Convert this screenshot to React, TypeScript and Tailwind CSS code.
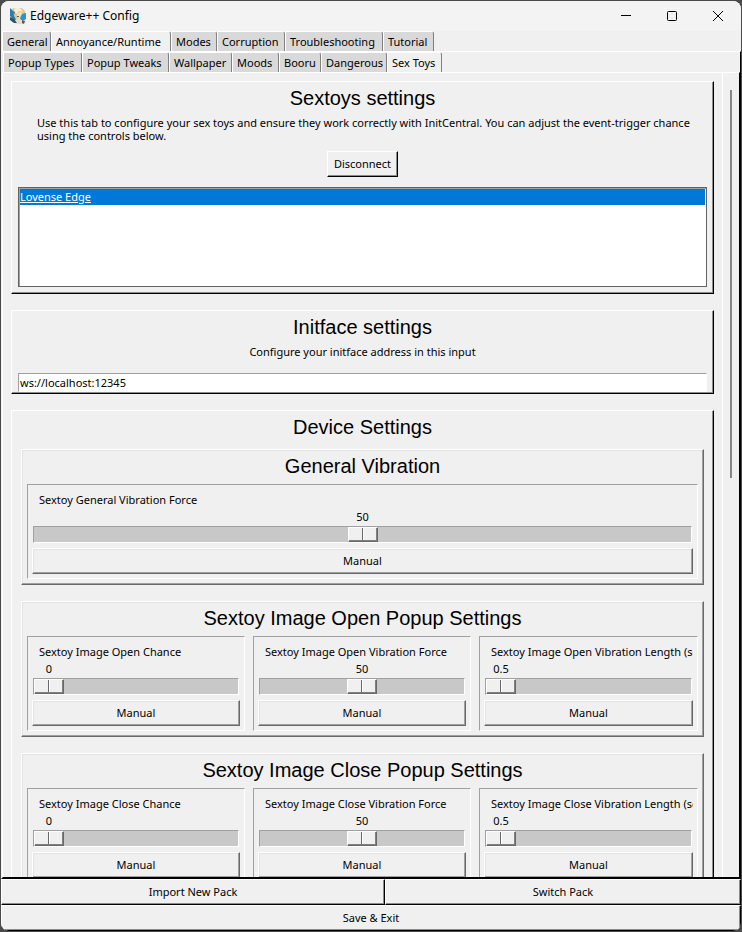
import { useState } from "react";
import clsx from "clsx";

const raised =
  "border border-t-white border-l-white border-r-black border-b-black shadow-[inset_-1px_-1px_0_#8c8c8c]";
const softRaised =
  "border border-t-white border-l-white border-r-[#696969] border-b-[#696969] shadow-[inset_-1px_-1px_0_#a0a0a0,inset_1px_1px_0_#e3e3e3]";
const sunken =
  "border border-t-[#a0a0a0] border-l-[#a0a0a0] border-r-white border-b-white";

type Tab = { label: string; width: string };

const mainTabs: Tab[] = [
  { label: "General", width: "w-[49px]" },
  { label: "Annoyance/Runtime", width: "w-[120px]" },
  { label: "Modes", width: "w-[46px]" },
  { label: "Corruption", width: "w-[68px]" },
  { label: "Troubleshooting", width: "w-[98px]" },
  { label: "Tutorial", width: "w-[51px]" },
];

const subTabs: Tab[] = [
  { label: "Popup Types", width: "w-[79px]" },
  { label: "Popup Tweaks", width: "w-[87px]" },
  { label: "Wallpaper", width: "w-[63px]" },
  { label: "Moods", width: "w-[47px]" },
  { label: "Booru", width: "w-[42px]" },
  { label: "Dangerous", width: "w-[66px]" },
  { label: "Sex Toys", width: "w-[55px]" },
];

function TabRow({ tabs, initial, name }: { tabs: Tab[]; initial: string; name: string }) {
  const [active, setActive] = useState(initial);
  return (
    <div role="tablist" aria-label={name} className="flex h-5 pl-px">
      {tabs.map((t) => (
        <button
          key={t.label}
          role="tab"
          aria-selected={t.label === active}
          onClick={() => setActive(t.label)}
          className={clsx(
            "shrink-0 rounded-tr-[3px] border-t border-r border-l border-t-white border-l-white border-r-[#808080] pl-1 text-left whitespace-nowrap",
            t.width,
            t.label === active ? "-mb-px bg-[#f0f0f0]" : "bg-[#d9d9d9]",
          )}
        >
          {t.label}
        </button>
      ))}
    </div>
  );
}

type Setting = { label: string; value: number; min: number; max: number; step: number };

function SliderPanel({ setting }: { setting: Setting }) {
  const [value, setValue] = useState(setting.value);
  const ratio = (value - setting.min) / (setting.max - setting.min);
  const id = setting.label.toLowerCase().replace(/[^a-z]+/g, "-");
  return (
    <div className={clsx("min-w-0 p-1", sunken)}>
      <div className="overflow-hidden">
        <label htmlFor={id} className="mt-[3px] block pl-[7px] leading-4 whitespace-nowrap">
          {setting.label}
        </label>
      </div>
      <div className="mt-px flex px-0.5">
        <div style={{ flexGrow: ratio }} />
        <output htmlFor={id} className="w-[30px] text-center leading-4">
          {value}
        </output>
        <div style={{ flexGrow: 1 - ratio }} />
      </div>
      <div className={clsx("mx-px mt-px flex bg-[#c8c8c8]", sunken)}>
        <input
          id={id}
          type="range"
          min={setting.min}
          max={setting.max}
          step={setting.step}
          value={value}
          onChange={(e) => setValue(Number(e.target.value))}
          className="h-[15px] w-full appearance-none bg-transparent [&::-webkit-slider-thumb]:h-[15px] [&::-webkit-slider-thumb]:w-[30px] [&::-webkit-slider-thumb]:appearance-none [&::-webkit-slider-thumb]:border [&::-webkit-slider-thumb]:border-t-white [&::-webkit-slider-thumb]:border-r-[#696969] [&::-webkit-slider-thumb]:border-b-[#696969] [&::-webkit-slider-thumb]:border-l-white [&::-webkit-slider-thumb]:bg-[linear-gradient(90deg,#f0f0f0_13px,#696969_13px,#696969_14px,#fff_14px,#fff_15px,#f0f0f0_15px)] [&::-webkit-slider-thumb]:shadow-[inset_-1px_-1px_0_#808080]"
        />
      </div>
      <button className={clsx("mt-[5px] block h-[26px] w-full bg-[#f0f0f0]", softRaised)}>Manual</button>
    </div>
  );
}

function SettingGroup({ title, settings }: { title: string; settings: Setting[] }) {
  return (
    <section className={clsx("px-[5px] pb-[5px]", softRaised)}>
      <h3 className="h-[34px] text-center font-['Liberation_Sans',Arial,sans-serif] text-xl leading-8">{title}</h3>
      <div className={clsx("grid gap-2", settings.length === 3 ? "grid-cols-[218fr_218fr_219fr]" : "grid-cols-1")}>
        {settings.map((s) => (
          <SliderPanel key={s.label} setting={s} />
        ))}
      </div>
    </section>
  );
}

function popupSettings(event: string): Setting[] {
  return [
    { label: `Sextoy Image ${event} Chance`, value: 0, min: 0, max: 100, step: 1 },
    { label: `Sextoy Image ${event} Vibration Force`, value: 50, min: 0, max: 100, step: 1 },
    { label: `Sextoy Image ${event} Vibration Length (sec)`, value: 0.5, min: 0.5, max: 10, step: 0.5 },
  ];
}

function AppIcon() {
  return (
    <svg width="18" height="18" viewBox="0 0 18 18" aria-hidden="true">
      <path d="M2 2l4-1 3 1 4-1 3 3 1 5-1 6-4 2-6-1-4-5z" fill="#dcc892" />
      <path d="M1 1l3 3 1 5 3 5-3-1-4-4z" fill="#267eb5" />
      <path d="M1 10l4 2 3 4H5l-4-3z" fill="#314e63" />
      <path d="M6 1l6 1 2 3-4-1-3 3-2-3z" fill="#f8efcf" />
      <path d="M8 6l4-1 2 4-3 3-3-2z" fill="#f3ddca" />
      <path d="M13 7l4-1v6l-4 2-2-3z" fill="#2895d0" />
      <path d="M6 13l3-2 3 2 4 0-1 4-6 0z" fill="#e4ddd0" />
      <path d="M8 9h2v1H8zM13 13l3 1-1 3-2-1zM4 4l2 1-1 3z" fill="#6b5548" />
    </svg>
  );
}

export default function App() {
  const [address, setAddress] = useState("ws://localhost:12345");
  return (
    <div className="h-screen bg-[#4a4a4a] p-px font-['Noto_Sans','Open_Sans',sans-serif] text-[11px] leading-4 text-black">
      <div className="flex h-full flex-col overflow-hidden rounded-lg bg-[#f0f0f0]">
        <header className="flex h-[30px] shrink-0 items-center bg-[#f3f3f3] pl-2">
          <AppIcon />
          <h1 className="ml-[3px] flex-1 text-xs">Edgeware++ Config</h1>
          <button aria-label="Minimize" className="flex h-full w-[46px] items-center justify-center">
            <svg width="10" height="10" viewBox="0 0 10 10" stroke="#000">
              <path d="M0 4.5h10" />
            </svg>
          </button>
          <button aria-label="Maximize" className="flex h-full w-[46px] items-center justify-center">
            <svg width="10" height="10" viewBox="0 0 10 10" fill="none" stroke="#000">
              <rect x=".5" y=".5" width="9" height="9" rx="1" />
            </svg>
          </button>
          <button aria-label="Close" className="flex h-full w-[46px] items-center justify-center">
            <svg width="10" height="10" viewBox="0 0 10 10" stroke="#000">
              <path d="M0 0l10 10M10 0L0 10" />
            </svg>
          </button>
        </header>

        <TabRow tabs={mainTabs} initial="Annoyance/Runtime" name="Sections" />
        <div className="flex min-h-0 flex-1 flex-col border-t border-r border-b border-l border-t-white border-r-black border-b-black border-l-[#f0f0f0]">
          <TabRow tabs={subTabs} initial="Sex Toys" name="Annoyance/Runtime" />
          <div className="flex min-h-0 flex-1 border border-t-white border-r-black border-b-black border-l-white">
            <main className="flex-1 overflow-y-auto px-2 pt-2 [scrollbar-width:none]">
              <div className="flex flex-col gap-4">
                <section className={clsx("px-1.5 pb-1.5", raised)}>
                  <h2 className="text-center font-['Liberation_Sans',Arial,sans-serif] text-xl leading-8">
                    Sextoys settings
                  </h2>
                  <p className="pt-0.5 pr-2 pl-[19px] leading-[13px]">
                    Use this tab to configure your sex toys and ensure they work correctly with InitCentral. You can
                    adjust the event-trigger chance using the controls below.
                  </p>
                  <div className="flex justify-center pt-[9px] pb-2.5">
                    <button className={clsx("h-[26px] w-[71px]", raised)}>Disconnect</button>
                  </div>
                  <ul
                    role="listbox"
                    aria-label="Devices"
                    className="h-[100px] border border-[#646464] bg-white p-px shadow-[inset_1px_1px_0_#a0a0a0]"
                  >
                    <li role="option" aria-selected="true" className="bg-[#0078d7] text-white underline">
                      Lovense Edge
                    </li>
                  </ul>
                </section>

                <section className={clsx("px-1.5 pb-px", raised)}>
                  <h2 className="text-center font-['Liberation_Sans',Arial,sans-serif] text-xl leading-8">
                    Initface settings
                  </h2>
                  <label htmlFor="address" className="block pt-px pb-[13px] text-center">
                    Configure your initface address in this input
                  </label>
                  <input
                    id="address"
                    type="text"
                    value={address}
                    onChange={(e) => setAddress(e.target.value)}
                    className={clsx("block h-[19px] w-full bg-white px-px outline-none", sunken)}
                  />
                </section>

                <section className={clsx("px-[9px] pb-2", raised)}>
                  <h2 className="h-[38px] text-center font-['Liberation_Sans',Arial,sans-serif] text-xl leading-8">
                    Device Settings
                  </h2>
                  <div className="flex flex-col gap-4">
                    <SettingGroup
                      title="General Vibration"
                      settings={[{ label: "Sextoy General Vibration Force", value: 50, min: 0, max: 100, step: 1 }]}
                    />
                    <SettingGroup title="Sextoy Image Open Popup Settings" settings={popupSettings("Open")} />
                    <SettingGroup title="Sextoy Image Close Popup Settings" settings={popupSettings("Close")} />
                  </div>
                </section>
              </div>
            </main>
            <div className="flex w-[17px] justify-center border-l border-white pt-[17px]">
              <div className="h-[388px] w-0.5 bg-[#868686]" />
            </div>
          </div>
        </div>

        <footer className="shrink-0">
          <div className="flex h-[26px]">
            <button className={clsx("w-[384px]", raised)}>Import New Pack</button>
            <button className={clsx("flex-1", raised)}>Switch Pack</button>
          </div>
          <button className={clsx("h-[26px] w-full", raised)}>Save &amp; Exit</button>
        </footer>
      </div>
    </div>
  );
}
